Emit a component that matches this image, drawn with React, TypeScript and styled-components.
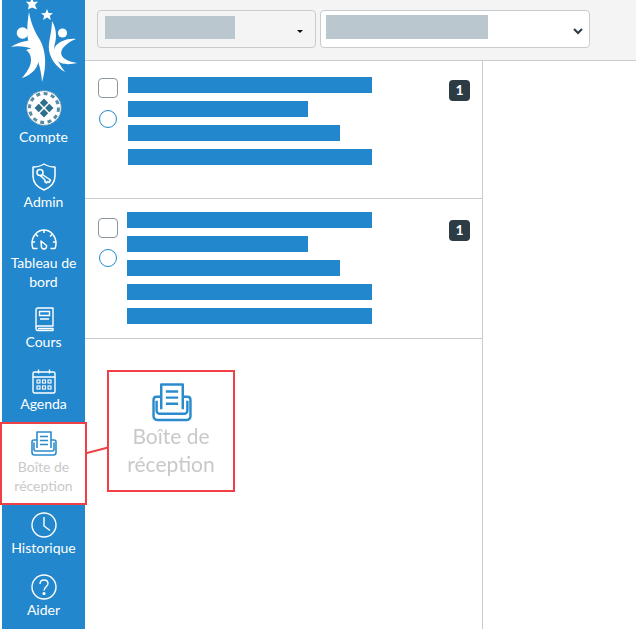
import React from "react";
import styled, { createGlobalStyle } from "styled-components";

const Global = createGlobalStyle`
  html, body { margin: 0; padding: 0; background: #fff; }
  body { font-family: Lato, "Liberation Sans", sans-serif; }
`;

const Page = styled.div`
  position: relative;
  display: flex;
  width: 636px;
  height: 629px;
  overflow: hidden;
  background: #fff;
`;

const Sidebar = styled.nav`
  flex: none;
  display: flex;
  flex-direction: column;
  width: 83px;
  margin-left: 2px;
  background: #2287cc;
`;

const LogoBox = styled.div`
  flex: none;
  height: 90px;
  margin-left: -2px;
  svg { display: block; }
`;

const NavItem = styled.div<{ $h: number; $gap: number; $top?: number }>`
  flex: none;
  height: ${(p) => p.$h}px;
  margin-top: ${(p) => p.$top ?? 0}px;
  display: flex;
  flex-direction: column;
  align-items: center;
  gap: ${(p) => p.$gap}px;
  color: #fff;
  font-size: 14px;
  line-height: 19px;
  text-align: center;
  svg { display: block; flex: none; }
`;

const ActiveItem = styled.div`
  flex: none;
  box-sizing: border-box;
  height: 83px;
  width: 87px;
  margin: -1px 0 0 -2px;
  padding-top: 7px;
  background: #fff;
  border: 2px solid #f04045;
  display: flex;
  flex-direction: column;
  align-items: center;
  color: #c8c9ca;
  font-size: 14px;
  line-height: 19px;
  text-align: center;
  svg { display: block; flex: none; }
`;

const Main = styled.div`
  flex: 1;
  min-width: 0;
  display: flex;
  flex-direction: column;
`;

const Toolbar = styled.div`
  flex: none;
  box-sizing: border-box;
  height: 61px;
  padding: 10px 0 0 12px;
  display: flex;
  align-items: flex-start;
  gap: 4px;
  background: #f4f4f4;
  border-bottom: 1px solid #c9cccf;
`;

const Select = styled.div<{ $w: number; $white?: boolean; $pad: number; $top: number }>`
  box-sizing: border-box;
  width: ${(p) => p.$w}px;
  height: 38px;
  padding: ${(p) => p.$top}px 6px 0 ${(p) => p.$pad}px;
  display: flex;
  align-items: flex-start;
  justify-content: space-between;
  background: ${(p) => (p.$white ? "#fff" : "#f4f4f4")};
  border: 1px solid #c9cccf;
  border-radius: 4px;
`;

const Mask = styled.div<{ $w: number; $h: number }>`
  width: ${(p) => p.$w}px;
  height: ${(p) => p.$h}px;
  background: #bac7cf;
`;

const Caret = styled.div`
  align-self: center;
  margin-right: 6px;
  width: 0;
  height: 0;
  border-left: 3px solid transparent;
  border-right: 3px solid transparent;
  border-top: 3px solid #111;
`;

const Chevron = styled.svg`
  align-self: center;
  display: block;
`;

const Content = styled.div`
  flex: 1;
  display: flex;
  min-height: 0;
`;

const List = styled.div`
  flex: none;
  box-sizing: border-box;
  width: 398px;
  border-right: 1px solid #c9cccf;
  display: flex;
  flex-direction: column;
  align-items: flex-start;
`;

const Row = styled.div<{ $top: number; $bottom: number }>`
  align-self: stretch;
  display: flex;
  align-items: flex-start;
  padding: ${(p) => p.$top}px 12px ${(p) => p.$bottom}px 13px;
  border-bottom: 1px solid #c9cccf;
`;

const Controls = styled.div<{ $w: number; $offset: number; $gap: number }>`
  flex: none;
  width: ${(p) => p.$w}px;
  padding-top: ${(p) => p.$offset}px;
  display: flex;
  flex-direction: column;
  gap: ${(p) => p.$gap}px;
`;

const Check = styled.div`
  box-sizing: border-box;
  width: 20px;
  height: 20px;
  border: 1px solid #8b969e;
  border-radius: 4px;
  background: #fff;
`;

const Radio = styled.div`
  box-sizing: border-box;
  width: 18px;
  height: 18px;
  margin-left: 1px;
  border: 1px solid #2287cc;
  border-radius: 50%;
  background: #fff;
`;

const Bars = styled.div`
  display: flex;
  flex-direction: column;
  gap: 8px;
`;

const Bar = styled.div<{ $w: number }>`
  width: ${(p) => p.$w}px;
  height: 16px;
  background: #2287cc;
`;

const Badge = styled.div<{ $offset: number }>`
  margin: ${(p) => p.$offset}px 0 0 auto;
  width: 21px;
  height: 21px;
  border-radius: 4px;
  background: #2d3b45;
  color: #fff;
  font-size: 14px;
  font-weight: 700;
  line-height: 20px;
  text-align: center;
`;

const Callout = styled.div`
  box-sizing: border-box;
  width: 128px;
  height: 122px;
  margin: 31px 0 0 22px;
  padding-top: 11px;
  border: 2px solid #f04045;
  background: #fff;
  color: #c8c9ca;
  font-size: 21px;
  line-height: 28px;
  text-align: center;
`;

const Soft = styled.div`
  display: flex;
  flex-direction: column;
  align-items: center;
  filter: blur(0.7px);
  svg { display: block; margin: 0 0 -1px 1px; }
`;

const Connector = styled.svg`
  position: absolute;
  left: 85px;
  top: 445px;
  pointer-events: none;
`;

const Logo = () => (
  <svg width="85" height="90" viewBox="0 0 85 90">
    <g fill="#fff">
      <polygon points="32,-2 33.6,2 38,1.5 35,5 37,9.5 32,7.5 28,9.5 28.8,5 26,1.5 30.2,2" />
      <polygon points="47,9 48.6,13 53,13.2 49.8,15.8 50.8,20 47,17.6 43,20 44.2,15.8 41,13.2 45.4,13" />
      <circle cx="22.5" cy="33" r="5.8" />
      <circle cx="62.5" cy="33" r="4.6" />
      <path d="M29 12 C31 24 35 32 40 40 C46 51 47 66 42 82 C41 68 37 55 30 46 C26 38 27 24 29 12 Z" />
      <path d="M11 47 C17 43 26 40 33 41 L36 50 C28 47 18 45 11 47 Z" />
      <path d="M32 48 C38 53 40 60 37 66 C34 72 28 76 22 78 C27 72 31 66 31 60 C31 55 29 52 26 50 Z" />
      <path d="M52 21 C56 28 57 36 55 43 C53 50 55 58 65 72 C56 67 50 58 49 50 C48 42 52 32 52 21 Z" />
      <path d="M76 39 C68 38 59 41 55 47 C52 53 55 60 61 63 C67 65 72 64 77 63 C71 62 65 60 62 56 C60 52 62 48 66 45 C69 42 73 40 76 39 Z" />
    </g>
  </svg>
);

const CompteIcon = () => (
  <svg width="36" height="36" viewBox="0 0 36 36">
    <circle cx="18" cy="18" r="17.5" fill="#fff" />
    <circle cx="18" cy="18" r="17.3" fill="none" stroke="#2e6f8e" strokeWidth="0.6" />
    <circle cx="18" cy="18" r="14.5" fill="none" stroke="#2e6f8e" strokeWidth="3" strokeDasharray="4 3.5" opacity="0.8" />
    <g fill="#2e6f8e">
      <polygon points="18,8.5 22.2,12.7 18,16.9 13.8,12.7" />
      <polygon points="18,19.1 22.2,23.3 18,27.5 13.8,23.3" />
      <polygon points="12.7,13.8 16.9,18 12.7,22.2 8.5,18" />
      <polygon points="23.3,13.8 27.5,18 23.3,22.2 19.1,18" />
    </g>
  </svg>
);

const AdminIcon = () => (
  <svg width="24" height="28" viewBox="0 0 24 28" fill="none" stroke="#fff" strokeWidth="1.5">
    <path d="M12 1 C15 3 19 4 23 4 V13 C23 20 18 24.5 12 27 C6 24.5 1 20 1 13 V4 C5 4 9 3 12 1 Z" strokeLinejoin="round" />
    <circle cx="8" cy="9.5" r="3" />
    <path d="M10.3 11.5 L18.5 17 L17 19.5 L15.5 18.5 L14.5 20 L12.8 18.6 L13 17 L8.5 12.6" strokeLinejoin="round" />
  </svg>
);

const GaugeIcon = () => (
  <svg width="26" height="22" viewBox="0 0 26 22" fill="none" stroke="#fff" strokeWidth="1.5">
    <path d="M6.5 20.5 H2 C1.3 18.8 1 17.3 1 15.5 C1 8 6.5 2 13 2 C19.5 2 25 8 25 15.5 C25 17.3 24.7 18.8 24 20.5 H19.5" strokeLinejoin="round" />
    <path d="M10 13 L15.5 17.5 C16 19.5 14.6 21 13 21 C11.2 21 10 19.5 10.4 18 Z" strokeLinejoin="round" />
    <path d="M13 2 V5 M5 6.5 L7 8.5 M21 6.5 L19 8.5 M1.5 14 H4 M24.5 14 H22" />
  </svg>
);

const BookIcon = () => (
  <svg width="20" height="25" viewBox="0 0 20 25" fill="none" stroke="#fff" strokeWidth="1.4">
    <path d="M2 21 V3 C2 1.8 2.8 1 4 1 H19 V19 H4 C2.8 19 2 19.8 2 21 C2 22.6 2.8 23.5 4 23.5 H19 V21.5 H4" strokeLinejoin="round" />
    <path d="M5.5 4.5 H15.5 V8.5 H5.5 Z M6 12 H15" />
  </svg>
);

const CalendarIcon = () => (
  <svg width="24" height="25" viewBox="0 0 24 25" fill="none" stroke="#fff" strokeWidth="1.4">
    <rect x="1" y="3" width="22" height="21" rx="1.5" />
    <path d="M1 8 H23 M6.5 0.5 V4.5 M17.5 0.5 V4.5" />
    <g strokeWidth="1.1">
      <rect x="5" y="11" width="3" height="3" />
      <rect x="10.5" y="11" width="3" height="3" />
      <rect x="16" y="11" width="3" height="3" />
      <rect x="5" y="17" width="3" height="3" />
      <rect x="10.5" y="17" width="3" height="3" />
      <rect x="16" y="17" width="3" height="3" />
    </g>
  </svg>
);

const InboxIcon = ({ size = 26 }: { size?: number }) => (
  <svg width={size} height={size} viewBox="0 0 26 26" fill="none" stroke="#2b8ccd" strokeWidth="1.6">
    <path d="M6 17 V1 H20 V17" strokeLinejoin="round" />
    <path d="M9 5.5 H17 M9 9.5 H17 M9 13.5 H17" />
    <path d="M6 9 H3 C1.8 9 1 9.8 1 11 V21.5 C1 23 2 24 3.5 24 H22.5 C24 24 25 23 25 21.5 V11 C25 9.8 24.2 9 23 9 H20" strokeLinejoin="round" />
    <path d="M3 11.5 V18 C3 19 4 20 5 20 H21 C22 20 23 19 23 18 V11.5" />
  </svg>
);

const ClockIcon = () => (
  <svg width="26" height="26" viewBox="0 0 26 26" fill="none" stroke="#fff" strokeWidth="1.4">
    <circle cx="13" cy="13" r="12" />
    <path d="M13 5 V14 L19 18.5" />
  </svg>
);

const HelpIcon = () => (
  <svg width="26" height="26" viewBox="0 0 26 26" fill="none" stroke="#fff" strokeWidth="1.4">
    <circle cx="13" cy="13" r="12" />
    <path d="M9 10 C9 7.5 10.8 6 13 6 C15.4 6 17 7.6 17 9.6 C17 12.6 13 13 13 16.5" />
    <circle cx="13" cy="19.5" r="0.9" fill="#fff" stroke="#fff" />
  </svg>
);

export default function App() {
  return (
    <Page>
      <Global />
      <Sidebar>
        <LogoBox><Logo /></LogoBox>
        <NavItem $h={73} $gap={1}><CompteIcon />Compte</NavItem>
        <NavItem $h={65} $gap={1}><AdminIcon />Admin</NavItem>
        <NavItem $h={79} $gap={3}><GaugeIcon /><span>Tableau de<br />bord</span></NavItem>
        <NavItem $h={62} $gap={0}><BookIcon />Cours</NavItem>
        <NavItem $h={54} $gap={0}><CalendarIcon />Agenda</NavItem>
        <ActiveItem><InboxIcon /><span>Boîte de<br />réception</span></ActiveItem>
        <NavItem $h={62} $gap={0} $top={7}><ClockIcon />Historique</NavItem>
        <NavItem $h={54} $gap={0}><HelpIcon />Aider</NavItem>
      </Sidebar>
      <Main>
        <Toolbar>
          <Select $w={219} $pad={7} $top={5}>
            <Mask $w={130} $h={23} />
            <Caret />
          </Select>
          <Select $w={270} $white $pad={5} $top={4}>
            <Mask $w={162} $h={24} />
            <Chevron width="10" height="7" viewBox="0 0 10 7" fill="none" stroke="#2d3b45" strokeWidth="2">
              <path d="M1 1 L5 5 L9 1" />
            </Chevron>
          </Select>
        </Toolbar>
        <Content>
          <List>
            <Row $top={16} $bottom={33}>
              <Controls $w={30} $offset={1} $gap={12}><Check /><Radio /></Controls>
              <Bars>
                <Bar $w={244} />
                <Bar $w={180} />
                <Bar $w={212} />
                <Bar $w={244} />
              </Bars>
              <Badge $offset={3}>1</Badge>
            </Row>
            <Row $top={13} $bottom={14}>
              <Controls $w={29} $offset={6} $gap={11}><Check /><Radio /></Controls>
              <Bars>
                <Bar $w={245} />
                <Bar $w={181} />
                <Bar $w={213} />
                <Bar $w={245} />
                <Bar $w={245} />
              </Bars>
              <Badge $offset={8}>1</Badge>
            </Row>
            <Callout>
              <Soft>
                <InboxIcon size={40} />
                <span>Boîte de<br />réception</span>
              </Soft>
            </Callout>
          </List>
        </Content>
      </Main>
      <Connector width="24" height="12" viewBox="0 0 24 12">
        <line x1="0" y1="8.5" x2="23" y2="2.5" stroke="#f04045" strokeWidth="2" />
      </Connector>
    </Page>
  );
}
